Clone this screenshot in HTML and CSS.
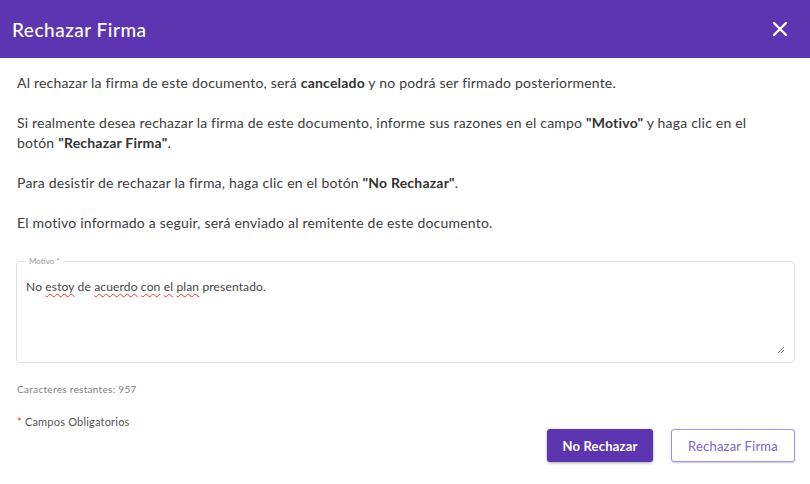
FILE: index.html
```html
<!DOCTYPE html>
<html lang="es">
<head>
<meta charset="utf-8">
<title>Rechazar Firma</title>
<link rel="stylesheet" href="styles.css">
</head>
<body>
<div class="dialog">
  <header class="head">
    <h1 class="title">Rechazar Firma</h1>
    <svg class="close" width="16" height="16" viewBox="0 0 16 16"><path d="M2 2L14 14M14 2L2 14" stroke="#fff" stroke-width="2.4" stroke-linecap="round"/></svg>
  </header>
  <div class="body">
    <p>Al rechazar la firma de este documento, será <b>cancelado</b> y no podrá ser firmado posteriormente.</p>
    <p>Si realmente desea rechazar la firma de este documento, informe sus razones en el campo <b>"Motivo"</b> y haga clic en el botón <b>"Rechazar Firma"</b>.</p>
    <p>Para desistir de rechazar la firma, haga clic en el botón <b>"No Rechazar"</b>.</p>
    <p>El motivo informado a seguir, será enviado al remitente de este documento.</p>
    <fieldset class="field">
      <legend class="legend">Motivo *</legend>
      <div class="input">No <span class="sp">estoy</span> de <span class="sp">acuerdo</span> <span class="sp">con</span> <span class="sp">el</span> <span class="sp">plan</span> presentado.</div>
      <svg class="grip" width="8" height="8" viewBox="0 0 8 8"><path d="M7 1L1 7M7 4L4 7" stroke="#888" stroke-width="1"/></svg>
    </fieldset>
    <div class="count">Caracteres restantes: 957</div>
    <div class="req"><span class="star">*</span> Campos Obligatorios</div>
    <div class="actions">
      <button class="btn primary">No Rechazar</button>
      <button class="btn outline">Rechazar Firma</button>
    </div>
  </div>
</div>
</body>
</html>
```
FILE: styles.css
```css
* { box-sizing: border-box; }
html, body { margin: 0; padding: 0; background: #fff; }
body { font-family: "Lato", "Noto Sans", sans-serif; color: #3c3c3c; width: 810px; height: 484px; overflow: hidden; }
.dialog { display: flex; flex-direction: column; }
.head { height: 58px; background: #5e35b1; display: flex; align-items: center; justify-content: space-between; padding: 0 22px 0 12px; }
.title { margin: 0; color: #fff; font-size: 19px; font-weight: 500; letter-spacing: 0.5px; }
.close { display: block; }
.body { padding: 15px 15px 0 17px; }
p { margin: 0 0 20px; max-width: 766px; font-size: 14px; line-height: 20px; letter-spacing: 0.2px; }
b { font-weight: 700; color: #333; }
.field { position: relative; margin: 23px 0 0 -1px; height: 107px; border: 1px solid #e2e2e2; border-radius: 4px; padding: 0 9px; width: 779px; }
.legend { font-size: 8px; color: #9a9a9a; padding: 0 3px; margin-left: 0; line-height: 10px; }
.input { font-size: 12px; letter-spacing: 0.15px; color: #444; padding-top: 13px; }
.sp { text-decoration: underline wavy #e33; text-underline-offset: 2px; text-decoration-thickness: 1px; }
.grip { position: absolute; right: 9px; bottom: 8px; }
.count { font-size: 10px; letter-spacing: 0.3px; color: #808080; margin-top: 20px; }
.req { font-size: 11px; letter-spacing: 0.2px; color: #555; margin-top: 20px; }
.star { color: #e53935; }
.actions { display: flex; justify-content: flex-end; gap: 18px; margin-top: 1px; }
.btn { font-family: inherit; font-size: 13px; height: 33px; border-radius: 3px; cursor: pointer; letter-spacing: 0.2px; }
.primary { background: #5e35b1; color: #fff; border: none; width: 106px; font-weight: 700; box-shadow: 0 1px 3px rgba(0,0,0,0.35); }
.outline { background: #fff; color: #7e63cf; border: 1.5px solid #a391e6; width: 124px; box-shadow: 0 1px 2px rgba(0,0,0,0.2); }
```
